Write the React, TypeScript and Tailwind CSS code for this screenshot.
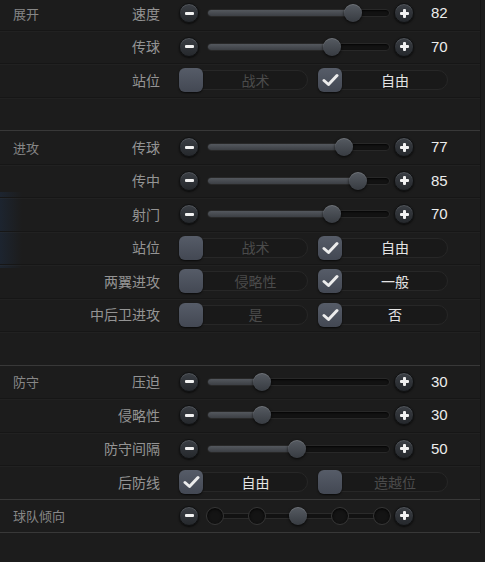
import React from "react";

type SliderRow = { kind: "slider"; label: string; value: number };
type ToggleRow = { kind: "toggle"; label: string; options: [string, string]; checked: 0 | 1 };
type StepRow = { kind: "steps"; label: string; step: number };
type BlankRow = { kind: "blank" };
type Row = SliderRow | ToggleRow | StepRow | BlankRow;

interface Section {
  title: string;
  rows: Row[];
}

const sections: Section[] = [
  {
    title: "展开",
    rows: [
      { kind: "slider", label: "速度", value: 82 },
      { kind: "slider", label: "传球", value: 70 },
      { kind: "toggle", label: "站位", options: ["战术", "自由"], checked: 1 },
      { kind: "blank" },
    ],
  },
  {
    title: "进攻",
    rows: [
      { kind: "slider", label: "传球", value: 77 },
      { kind: "slider", label: "传中", value: 85 },
      { kind: "slider", label: "射门", value: 70 },
      { kind: "toggle", label: "站位", options: ["战术", "自由"], checked: 1 },
      { kind: "toggle", label: "两翼进攻", options: ["侵略性", "一般"], checked: 1 },
      { kind: "toggle", label: "中后卫进攻", options: ["是", "否"], checked: 1 },
      { kind: "blank" },
    ],
  },
  {
    title: "防守",
    rows: [
      { kind: "slider", label: "压迫", value: 30 },
      { kind: "slider", label: "侵略性", value: 30 },
      { kind: "slider", label: "防守间隔", value: 50 },
      { kind: "toggle", label: "后防线", options: ["自由", "造越位"], checked: 0 },
    ],
  },
  {
    title: "球队倾向",
    rows: [{ kind: "steps", label: "", step: 2 }],
  },
];

const RoundButton = ({ plus }: { plus?: boolean }) => (
  <div className="w-[20px] h-[20px] rounded-full bg-gradient-to-b from-[#3b3f45] to-[#25282c] border border-[#101112] shadow-[0_1px_2px_rgba(0,0,0,0.7),inset_0_1px_0_rgba(255,255,255,0.12)] flex items-center justify-center shrink-0">
    <div className="relative w-[9px] h-[9px] flex items-center justify-center">
      <div className="absolute w-[9px] h-[3px] bg-[#f2f2f2] rounded-[1px]" />
      {plus && <div className="absolute w-[3px] h-[9px] bg-[#f2f2f2] rounded-[1px]" />}
    </div>
  </div>
);

const Thumb = ({ center }: { center: number }) => (
  <div
    className="absolute top-1/2 -translate-y-1/2 w-[18px] h-[18px] rounded-full bg-gradient-to-b from-[#565b62] to-[#383c42] shadow-[0_1px_3px_rgba(0,0,0,0.8),inset_0_1px_0_rgba(255,255,255,0.15)]"
    style={{ left: center - 9 }}
  />
);

const Slider = ({ value }: { value: number }) => {
  const center = 1.5 + 1.75 * value;
  return (
    <div className="flex items-center">
      <RoundButton />
      <div className="relative ml-[8px] w-[183px] h-[8px] rounded-full bg-[#121212] border border-[#282828] shadow-[inset_0_1px_2px_rgba(0,0,0,0.8)]">
        <div
          className="absolute left-0 top-0 bottom-0 rounded-full bg-gradient-to-b from-[#54585e] to-[#3c3f44]"
          style={{ width: center }}
        />
        <Thumb center={center} />
      </div>
      <div className="ml-[4px]">
        <RoundButton plus />
      </div>
      <span className="ml-[17px] text-[15px] text-[#ececec] font-['Liberation_Sans',sans-serif]">{value}</span>
    </div>
  );
};

const Steps = ({ step }: { step: number }) => {
  const points = [8, 50, 91, 133, 175];
  return (
    <div className="flex items-center">
      <RoundButton />
      <div className="relative ml-[8px] w-[183px] h-[20px]">
        <div className="absolute left-[8px] right-[8px] top-1/2 -translate-y-1/2 h-[6px] bg-[#121212] border-y border-[#2b2b2b]" />
        {points.map((p, i) =>
          i === step ? (
            <Thumb key={i} center={p} />
          ) : (
            <div
              key={i}
              className="absolute top-1/2 -translate-y-1/2 w-[18px] h-[18px] rounded-full bg-[#141414] border border-[#363636] shadow-[inset_0_1px_3px_rgba(0,0,0,0.9)]"
              style={{ left: p - 9 }}
            />
          )
        )}
      </div>
      <div className="ml-[4px]">
        <RoundButton plus />
      </div>
    </div>
  );
};

const CheckBox = ({ checked }: { checked: boolean }) => (
  <div className="absolute left-0 top-1/2 -translate-y-1/2 w-[24px] h-[24px] rounded-[6px] bg-gradient-to-b from-[#565c68] to-[#434853] shadow-[0_1px_2px_rgba(0,0,0,0.7)] flex items-center justify-center">
    {checked && (
      <svg width="17" height="14" viewBox="0 0 17 14">
        <path d="M2 7.5 L6.5 11.5 L15 2.5" fill="none" stroke="#ececec" strokeWidth="3" strokeLinecap="round" strokeLinejoin="round" />
      </svg>
    )}
  </div>
);

const Option = ({ text, checked, width }: { text: string; checked: boolean; width: string }) => (
  <div className={`relative h-[24px] ${width}`}>
    <div className="absolute inset-x-0 top-[2px] bottom-[2px] rounded-full border border-[#272727] bg-[#191919]" />
    <CheckBox checked={checked} />
    <div
      className={`absolute inset-y-0 left-[24px] right-0 flex items-center justify-center text-[14px] ${
        checked ? "text-[#e4e4e4]" : "text-[#4b4b4b]"
      }`}
    >
      {text}
    </div>
  </div>
);

const Toggle = ({ options, checked }: { options: [string, string]; checked: 0 | 1 }) => (
  <div className="flex items-center gap-[10px]">
    <Option text={options[0]} checked={checked === 0} width="w-[129px]" />
    <Option text={options[1]} checked={checked === 1} width="w-[130px]" />
  </div>
);

export default function App() {
  return (
    <div className="relative w-[485px] h-[562px] overflow-hidden bg-[#1c1c1c] font-['Noto_Sans_CJK_SC',sans-serif]">
      <div className="absolute left-0 top-[192px] w-[22px] h-[76px] bg-gradient-to-r from-[#1d2838] to-transparent opacity-70" />
      <div className="relative -mt-[3px] border-r border-[#141414] w-[481px]">
        {sections.map((section, si) =>
          section.rows.map((row, ri) => {
            const last = ri === section.rows.length - 1;
            return (
              <div
                key={`${si}-${ri}`}
                className={`flex items-center h-[33.5px] border-b ${
                  last ? "border-[#383838]" : "border-[#161616] shadow-[0_1px_0_rgba(255,255,255,0.025)]"
                }`}
              >
                <div className="w-[160px] flex items-center justify-between pl-[13px] text-[14px]">
                  <span className="text-[13px] text-[#878787]">{ri === 0 ? section.title : ""}</span>
                  {row.kind !== "blank" && <span className="text-[#949494]">{row.label}</span>}
                </div>
                <div className="ml-[19px]">
                  {row.kind === "slider" && <Slider value={row.value} />}
                  {row.kind === "toggle" && <Toggle options={row.options} checked={row.checked} />}
                  {row.kind === "steps" && <Steps step={row.step} />}
                </div>
              </div>
            );
          })
        )}
      </div>
    </div>
  );
}
